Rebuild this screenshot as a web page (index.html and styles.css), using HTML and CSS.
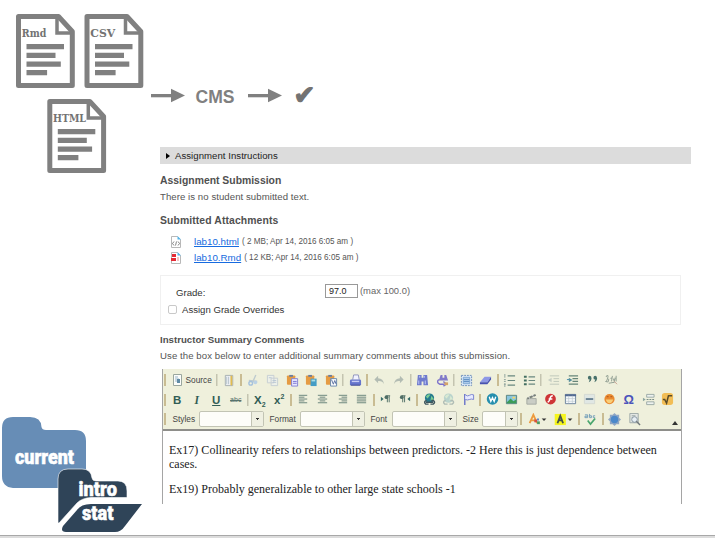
FILE: index.html
```
<!DOCTYPE html>
<html lang="en">
<head>
<meta charset="utf-8">
<title>Course workflow</title>
<link rel="stylesheet" href="styles.css">
</head>
<body>
<main class="slide">
<svg class="diagram" width="715" height="538" viewBox="0 0 715 538">
  <defs>
    <g id="file">
      <path d="M2.500 2.500H42.500L56.300 17.500V71.500H2.500Z" fill="#fff" stroke="#808080" stroke-width="5" stroke-linejoin="round"/>
      <path d="M41 3V19H56" fill="none" stroke="#808080" stroke-width="3.500"/>
      <path d="M10.500 30h37.500v5.300h-37.500zM10.500 38.700h29v5.300h-29zM10.500 47.400h34.300v5.300h-34.300zM10.500 56h20.600v5.300h-20.600z" fill="#808080"/>
    </g>
    <g id="arrow" fill="#808080"><path d="M0 4.700h20v3.300H0z"/><path d="M20 -.5L34 6.300L20 13z"/></g>
  </defs>
  <g class="doc-name">
    <use href="#file" x="16" y="14"/><text x="21.800" y="36.700" textLength="24.500" lengthAdjust="spacingAndGlyphs">Rmd</text>
    <use href="#file" x="84.500" y="14"/><text x="90.300" y="36.700" textLength="25" lengthAdjust="spacingAndGlyphs">CSV</text>
    <use href="#file" x="47.300" y="99"/><text x="53" y="121.700" textLength="33" lengthAdjust="spacingAndGlyphs">HTML</text>
  </g>
  <use href="#arrow" x="151" y="89.300"/>
  <text class="cms" x="195.500" y="103.300" textLength="39" lengthAdjust="spacingAndGlyphs">CMS</text>
  <use href="#arrow" x="248" y="89.300"/>
  <text class="check" x="293.500" y="104">✔</text>
  <path fill="#678db6" d="M2 428Q2 417 13 417H30Q41 417 41.500 427Q42 430 46 430H75Q86 430 86 441V478Q86 488 75 488H13Q2 487 2 476Z"/>
  <path fill="#2f4458" stroke="#fff" stroke-width=".6" d="M58 523V479Q58 469 68 469H82Q91 469 92 478Q92.500 481 96 481H118Q127 481 127 491V497.500H91Q82 498 77 503L59 523Z"/>
  <path fill="#2f4458" d="M142 504H91Q81 504 77 510L63 526Q60 532 66 532H115Q121 532 125 526Z"/>
  <g class="folder-name">
    <text x="15" y="463.500" textLength="59" lengthAdjust="spacingAndGlyphs">current</text>
    <text x="78.500" y="496" textLength="38.500" lengthAdjust="spacingAndGlyphs">intro</text>
    <text x="82" y="519.500" textLength="31.500" lengthAdjust="spacingAndGlyphs">stat</text>
  </g>
</svg>

<section class="form">
  <div class="accordion"><i class="caret"></i><span class="t-instr">Assignment Instructions</span></div>
  <h2 class="h-sub">Assignment Submission</h2>
  <p class="p-none">There is no student submitted text.</p>
  <h2 class="h-att">Submitted Attachments</h2>
  <ul class="files">
    <li><svg width="12" height="12" viewBox="0 0 12 12"><path d="M1.500.5h6l3 3v8h-9z" fill="#fff" stroke="#b8b8b8"/><path d="M7.500 0l3.500 3.500h-3.500z" fill="#55b4e8"/><path d="M4 5.500L2.500 7.500L4 9.500M8 5.500l1.500 2L8 9.500M6.500 5.500l-1 4" fill="none" stroke="#666" stroke-width=".8"/></svg><a>lab10.html</a><span>( 2 MB; Apr 14, 2016 6:05 am )</span></li>
    <li><svg width="12" height="12" viewBox="0 0 12 12"><path d="M1.500.5h6l3 3v8h-9z" fill="#fff" stroke="#b8b8b8"/><path d="M7.500 0l3.500 3.500h-3.500z" fill="#55b4e8"/><path d="M2 2h4v3H2zM1 6h5v3H1z" fill="#e52a35"/><path d="M7 6h2M7 8h2" stroke="#e88"/></svg><a>lab10.Rmd</a><span>( 12 KB; Apr 14, 2016 6:05 am )</span></li>
  </ul>
  <div class="grade">
    <div class="grade-row"><label>Grade:</label><span class="score">97.0</span><span class="max">(max 100.0)</span></div>
    <div class="over-row"><i class="box"></i><span>Assign Grade Overrides</span></div>
  </div>
  <h2 class="h-com">Instructor Summary Comments</h2>
  <p class="p-use">Use the box below to enter additional summary comments about this submission.</p>

  <div class="editor">
    <div class="toolbar">
      <div class="bar">
        <i class="sep gold"></i>
        <span class="source"><svg width="10" height="12" viewBox="0 0 10 12"><path d="M.5.5h8v11h-8z" fill="#fbfcfa" stroke="#9aa69e"/><path d="M2 3h3M2 5h4M2 7h3" stroke="#9bb5c8"/><path d="M4 5h3v4H4z" fill="#5f8aa6"/></svg>Source</span>
        <i class="sep"></i>
        <b class="ic"><svg viewBox="0 0 14 14"><path d="M2.500 1.500h8v11h-8z" fill="#eef1f5" stroke="#a5aeb0"/><path d="M4 3v8M6 3v8" stroke="#b5c2cb"/><path d="M8 2h2v9l-1 2-1-2z" fill="#e1bc50"/></svg></b>
        <i class="sep gold"></i>
        <b class="ic dim"><svg viewBox="0 0 14 14"><path d="M9.500 1L6 9M2 7l9 1" stroke="#aebfcb" stroke-width="1.500"/><circle cx="4" cy="10" r="2" fill="none" stroke="#8db2dc" stroke-width="1.500"/><circle cx="9" cy="9" r="2" fill="#a9c7e8"/></svg></b>
        <b class="ic dim"><svg viewBox="0 0 14 14"><path d="M1.500 1.500h7v8h-7zM5.500 4.500h7v8h-7z" fill="#edf0ee" stroke="#b9c3cf"/><path d="M7 7h4M7 9h4M3 4h3" stroke="#a8bbd3"/></svg></b>
        <b class="ic"><svg viewBox="0 0 14 14"><rect x="1" y="1.500" width="9" height="10" rx="1" fill="#e59b43"/><path d="M3.500 1h4v2h-4z" fill="#687da1"/><path d="M6 5h6.500v8H6z" fill="#e8e8ff" stroke="#837fd1"/><path d="M7.500 8h4M7.500 10h4" stroke="#7871d1"/></svg></b>
        <b class="ic"><svg viewBox="0 0 14 14"><rect x="1" y="1.500" width="9" height="10" rx="1" fill="#e59b43"/><path d="M3.500 1h4v2h-4z" fill="#687da1"/><path d="M6 5h6.500v8H6z" fill="#449dc5"/><path d="M7 6h4v2h-4" fill="#a9dce4"/></svg></b>
        <b class="ic"><svg viewBox="0 0 14 14"><rect x="1" y="1.500" width="9" height="10" rx="1" fill="#e59b43"/><path d="M3.500 1h4v2h-4z" fill="#687da1"/><path d="M6 5h6.500v8H6z" fill="#fff" stroke="#6384aa"/><path d="M7 6l2 5 1.500-4 1.500 4" fill="none" stroke="#546ca0"/></svg></b>
        <i class="sep"></i>
        <b class="ic"><svg viewBox="0 0 14 14"><path d="M4 6l1-5h5l1 5" fill="#f1f2ff" stroke="#8c91bb"/><rect x="1" y="6" width="12" height="6.500" rx="1.500" fill="#6675cc"/><path d="M3 8h8" stroke="#c8cdf5" stroke-width="1.500"/><path d="M2 12h10" stroke="#474f91"/></svg></b>
        <i class="sep gold"></i>
        <b class="ic"><svg viewBox="0 0 14 14"><path d="M5.500 2L1.500 6l4 4V7.500Q10 7 12 11Q11 4.500 5.500 4.500z" fill="#b3bcb3"/></svg></b>
        <b class="ic"><svg viewBox="0 0 14 14"><path d="M8.500 2l4 4-4 4V7.500Q4 7 2 11Q3 4.500 8.500 4.500z" fill="#b3bcb3"/></svg></b>
        <i class="sep"></i>
        <b class="ic"><svg viewBox="0 0 14 14"><path d="M2 1h4v3h2V1h4l1 11H8V8H6v4H1z" fill="#6f7bcd"/><path d="M3 7v4M10 7v4M4 2v2M9 2v2" stroke="#c1c9fa"/></svg></b>
        <b class="ic"><svg viewBox="0 0 14 14"><path d="M5 1h2v3h2V1h2l2 6H3z" fill="#817ac9"/><path d="M3 6Q0 9 4 11H9M8 8l3 3-3 2" fill="none" stroke="#7c71cb" stroke-width="1.500"/><path d="M9 9h4v3H9z" fill="#d5a367"/></svg></b>
        <i class="sep"></i>
        <b class="ic"><svg viewBox="0 0 14 14"><path d="M1.500 1.500h11v11h-11z" fill="#e4effb" stroke="#6c8db8" stroke-dasharray="2 1"/><path d="M3.500 3.500h7v7h-7z" fill="#aecbea" stroke="#7ba5d0"/><path d="M4 6h6M4 8h6" stroke="#5d8ac0"/></svg></b>
        <b class="ic"><svg viewBox="0 0 14 14"><path d="M1 9l5-6h7l-4 6z" fill="#8e98e6"/><path d="M1 9h8l4-6v3l-4 5H1z" fill="#4752b2"/></svg></b>
        <i class="sep gold"></i>
        <b class="ic"><svg viewBox="0 0 14 14"><path d="M5 2h8M5 7h8M5 12h8" stroke="#69877f" stroke-width="1.200"/><path d="M2 0v4M1 6h2M1 8h2M1 11h2M2 10v4" stroke="#8ba099"/></svg></b>
        <b class="ic"><svg viewBox="0 0 14 14"><path d="M6 3h7M6 7h7M6 11h7" stroke="#69877f" stroke-width="1.300"/><path d="M1 2h3v2H1zM1 6h3v2H1zM1 10h3v2H1z" fill="#446f62"/></svg></b>
        <i class="sep"></i>
        <b class="ic dim"><svg viewBox="0 0 14 14"><path d="M3 2h10M7 5h6M7 8h6M3 11h10" stroke="#aebaaf"/><path d="M5 4L1 6.500 5 9z" fill="#bbc5bd"/></svg></b>
        <b class="ic"><svg viewBox="0 0 14 14"><path d="M3 2h10M7 5h6M7 8h6M3 11h10" stroke="#678579" stroke-width="1.300"/><path d="M1 6h4" stroke="#468baa"/><path d="M3 4l4 2.500L3 9z" fill="#568e9c"/></svg></b>
        <b class="ic"><svg viewBox="0 0 14 14"><path d="M2 4Q2 2 4 2Q6 2 6 5Q5.500 8 3 9l1-3Q2 6 2 4zM8 4Q8 2 10 2Q12 2 12 5Q11.500 8 9 9l1-3Q8 6 8 4z" fill="#47706a"/></svg></b>
        <b class="ic"><svg viewBox="0 0 14 14"><path d="M1 3Q4 0 3 4T1 8q3 2 3-3M6 5q2-2 1 3M8 2l-1 6M9 5l1 3 1-4M12 2v6M4 10l6-1" fill="none" stroke="#98a598" stroke-width="1.100"/><path d="M10 8l3 3" stroke="#c79d8d"/></svg></b>
      </div>
      <div class="bar">
        <i class="sep gold"></i>
        <b class="ic ltr">B</b><b class="ic ltr serif"><em>I</em></b><b class="ic ltr"><u>U</u></b><b class="ic strike"><s>abc</s></b>
        <i class="sep"></i>
        <b class="ic ltr x">X<sub>2</sub></b><b class="ic ltr x">x<sup>2</sup></b>
        <i class="sep gold"></i>
        <b class="ic"><svg viewBox="0 0 14 14"><path d="M2 2.500h9M2 4.500h6M2 6.500h9M2 8.500h6M2 10.500h9" stroke="#668178"/></svg></b>
        <b class="ic"><svg viewBox="0 0 14 14"><path d="M2 2.500h10M4 4.500h6M2 6.500h10M4 8.500h6M2 10.500h10" stroke="#668178"/></svg></b>
        <b class="ic"><svg viewBox="0 0 14 14"><path d="M3 2.500h9M6 4.500h6M3 6.500h9M6 8.500h6M3 10.500h9" stroke="#668178"/></svg></b>
        <b class="ic"><svg viewBox="0 0 14 14"><path d="M2 2.500h10M2 4.500h10M2 6.500h10M2 8.500h10M2 10.500h10" stroke="#668178"/></svg></b>
        <i class="sep gold"></i>
        <b class="ic"><svg viewBox="0 0 14 14"><path d="M2 4l3 2.500L2 9z" fill="#366b68"/><path d="M8 3h4M9 3v7M11 3v7" stroke="#506e66"/><circle cx="8" cy="4.500" r="2" fill="#506e66"/></svg></b>
        <b class="ic"><svg viewBox="0 0 14 14"><path d="M12 4L9 6.500 12 9z" fill="#366b68"/><path d="M3 3h4M4 3v7M6 3v7" stroke="#506e66"/><circle cx="3" cy="4.500" r="2" fill="#506e66"/></svg></b>
        <i class="sep gold"></i>
        <b class="ic"><svg viewBox="0 0 14 14"><circle cx="7" cy="5.500" r="5" fill="#257b8d"/><path d="M3 4Q6 0 8 2L5 6zM9 3l3 4-4 1z" fill="#7bcc93"/><path d="M3 10h8M4 8Q0 9 3 12h3M9 8h2q3 2 0 4H8" fill="none" stroke="#3e565e" stroke-width="1.500"/></svg></b>
        <b class="ic dim"><svg viewBox="0 0 14 14"><circle cx="7" cy="5.500" r="5" fill="#a9cbc8"/><path d="M3 4Q6 0 8 2L5 6zM9 3l3 4-4 1z" fill="#d2e8cf"/><path d="M4 8Q0 9 3 12h3M9 8h2q3 2 0 4H8" fill="none" stroke="#9aaba8" stroke-width="1.500"/></svg></b>
        <b class="ic"><svg viewBox="0 0 14 14"><path d="M3 1v12" stroke="#6771ca" stroke-width="1.500"/><path d="M3.500 2Q6 4 8 2.500T12.500 2V7Q10 6 8 7T3.500 7" fill="#e6e9ff" stroke="#7680ce"/></svg></b>
        <i class="sep gold"></i>
        <b class="ic"><svg viewBox="0 0 14 14"><circle cx="7" cy="6.500" r="6.200" fill="#268fae"/><path d="M3.500 4l1.700 5L7 5l1.800 4 1.700-5" fill="none" stroke="#fff" stroke-width="1.400"/></svg></b>
        <b class="ic"><svg viewBox="0 0 14 14"><path d="M1.500 2.500h11v9h-11z" fill="#8ac5df" stroke="#58837b"/><path d="M2 10l4-4 3 3 3-2v4H2z" fill="#3c9c58"/><path d="M8 4h3v2H8z" fill="#f3d766"/></svg></b>
        <b class="ic"><svg viewBox="0 0 14 14"><path d="M2 6h10v6H2z" fill="#cacdc5" stroke="#a3a9a1"/><path d="M2 5l9-4 1 2-9 4z" fill="#777f7a"/><path d="M4 4l1 2M8 2l1 2" stroke="#eee"/></svg></b>
        <b class="ic"><svg viewBox="0 0 14 14"><circle cx="7" cy="6.500" r="5.800" fill="#ce3537"/><path d="M9.500 3Q7 3 6.500 6T4 10M5 6.500h4" fill="none" stroke="#fff" stroke-width="1.600"/></svg></b>
        <b class="ic"><svg viewBox="0 0 14 14"><path d="M1.500 1.500h11v10h-11z" fill="#f4f8fa" stroke="#687f9b"/><path d="M1 2.500h12" stroke="#526991" stroke-width="2"/><path d="M2 6h10M2 9h10M5 3v8M9 3v8" stroke="#bcc9d0" stroke-width=".7"/></svg></b>
        <b class="ic"><svg viewBox="0 0 14 14"><path d="M1.500 1.500h11v10h-11z" fill="#e0e7e4" stroke="#d4d9d3"/><path d="M3 6.500h8" stroke="#688092" stroke-width="2"/></svg></b>
        <b class="ic"><svg viewBox="0 0 14 14"><circle cx="7" cy="6.500" r="5.500" fill="#e98a30"/><path d="M3 7h8Q10 11 7 11T3 7" fill="#f9ce78"/><path d="M4 4h2M8 4h2" stroke="#ab521d"/></svg></b>
        <b class="ic ltr omega">Ω</b>
        <b class="ic"><svg viewBox="0 0 14 14"><path d="M5 1.500h8v3H5zM5 9.500h8v3H5z" fill="#edf1ef" stroke="#9aa9a5"/><path d="M5 7h8" stroke="#6f857f" stroke-dasharray="2 1"/><path d="M1 5l3 2-3 2z" fill="#8ba49f"/></svg></b>
        <b class="ic"><svg viewBox="0 0 14 14"><rect x="1" y="0" width="12" height="13" rx="3" fill="#f2bd55"/><path d="M2 7h2l2 4 2-8h4" fill="none" stroke="#5a4c29" stroke-width="1.600"/></svg></b>
      </div>
      <div class="bar combos">
        <i class="sep gold"></i>
        <span class="lab styles">Styles</span><span class="combo"><i></i></span>
        <span class="lab format">Format</span><span class="combo"><i></i></span>
        <span class="lab font">Font</span><span class="combo"><i></i></span>
        <span class="lab size">Size</span><span class="combo small"><i></i></span>
        <i class="sep wide gold"></i>
        <b class="ic color"><svg width="22" height="14" viewBox="0 0 22 14"><path d="M2 11L6 2l4 9M4 8h4" fill="none" stroke="#ed9b3e" stroke-width="2"/><path d="M7 7h3v3H7z" fill="#d45143"/><path d="M10 9h3v3h-3z" fill="#4d9c63"/><path d="M10 6h2v2h-2z" fill="#567ec6"/><path d="M15 6h5l-2.500 2.500z" fill="#333"/></svg></b>
        <b class="ic color"><svg width="22" height="14" viewBox="0 0 22 14"><path d="M1 1h12v12H1z" fill="#f5f51e"/><path d="M4 11l3-8 3 8M5 8h4" fill="none" stroke="#455349" stroke-width="2"/><path d="M15 6h5l-2.500 2.500z" fill="#333"/></svg></b>
        <i class="sep gold"></i>
        <b class="ic"><svg viewBox="0 0 14 14"><path d="M1 2h3v3H1V3.500h3M6 1v4h2V3H6M12 3H10v2h2" fill="none" stroke="#719eb9"/><path d="M4 8l3 4 5-6" fill="none" stroke="#49a66e" stroke-width="1.800"/></svg></b>
        <i class="sep gold"></i>
        <b class="ic"><svg viewBox="0 0 14 14"><path d="M7 0l2 2h3v3l2 2-2 2v3H9l-2 2-2-2H2V9L0 7l2-2V2h3z" fill="#8fa6c4"/><circle cx="7" cy="7" r="4" fill="#4b88ca"/></svg></b>
        <b class="ic"><svg viewBox="0 0 14 14"><path d="M2 .5h9v10H2z" fill="#e3e7e4" stroke="#99a5a4"/><path d="M4 3h4M4 5h3" stroke="#92a1a0"/><circle cx="7" cy="7" r="3" fill="#e7eff4" stroke="#8594a0"/><path d="M9 9l4 4" stroke="#70777b" stroke-width="1.500"/></svg></b>
        <span class="collapse"></span>
      </div>
    </div>
    <div class="content">
      <p>Ex17) Collinearity refers to relationships between predictors. -2 Here this is just dependence between</p>
      <p>cases.</p>
      <p class="answer">Ex19) Probably generalizable to other large state schools -1</p>
    </div>
  </div>
</section>
</main>
</body>
</html>
```
FILE: styles.css
```
* { box-sizing: border-box; }
body { margin: 0; background: #fff; }
.slide {
  position: relative;
  width: 715px; height: 538px;
  overflow: hidden;
  border-bottom: 2px solid #dcdcdc;
  box-shadow: inset 0 -1px #a8a8a8;
}
.diagram { position: absolute; left: 0; top: 0; }
.doc-name { font: bold 11.500px "DejaVu Serif", serif; fill: #737373; }
.cms { font: bold 18.500px "Liberation Sans", sans-serif; fill: #808080; }
.check { font: 26px "DejaVu Sans", sans-serif; fill: #737373; stroke: #737373; stroke-width: 1.200; }
.folder-name { font: 900 20px Roboto, sans-serif; fill: #fff; stroke: #fff; stroke-width: .5; }

.form {
  width: 531px;
  margin-left: 160px;
  padding-top: 147px;
  font: 9.600px/12px "Liberation Sans", sans-serif;
  color: #555;
}
.form span, .form a, p, h2, label { white-space: nowrap; }
h2, p, ul { margin: 0; padding: 0; }
h2 { font-size: 10.400px; line-height: 12px; color: #505050; }
.accordion { height: 17px; background: #dcdcdc; display: flex; align-items: center; color: #222; letter-spacing: .04px; }
.caret { border: 3px solid transparent; border-left: 4px solid #000; border-right: 0; margin: 0 5px 0 6px; }
.h-sub { margin-top: 11px; }
.p-none { margin-top: 4px; letter-spacing: .06px; }
.h-att { margin-top: 12px; letter-spacing: .1px; }
.files { list-style: none; margin-top: 7px; }
.files li { height: 16px; display: flex; align-items: center; padding-left: 10px; }
.files svg { margin-right: 12px; }
.files a { color: #176be0; text-decoration: underline; font-size: 9.750px; }
.files span { font-size: 8.150px; margin-left: 3px; }
.grade { width: 521px; height: 50px; margin-top: 9px; border: 1px solid #f0f0f0; padding: 7px 0 0 7px; color: #333; }
.grade-row { display: flex; height: 15px; align-items: center; padding-left: 8px; }
.grade-row label { width: 149px; padding-top: 4px; }
.score { width: 33px; height: 14px; border: 1px solid #999; padding-left: 3px; font-size: 9px; line-height: 13px; color: #222; }
.max { margin-left: 2px; color: #666; font-size: 9.400px; }
.over-row { display: flex; align-items: center; height: 23px; }
.box { width: 9px; height: 9px; border: 1px solid #c9c9c9; border-radius: 2px; margin-right: 5px; }
.h-com { margin-top: 9px; font-size: 9.670px; }
.p-use { margin-top: 4px; letter-spacing: .075px; }

.editor { width: 520px; height: 135px; margin: 7px 0 0 2px; border: solid #a5a5a5; border-width: 0 1px 0 1px; }
.toolbar { height: 62px; background: #eff0dc; border-bottom: 2px solid #8e8e8a; padding-top: 1.500px; }
.bar { display: flex; align-items: center; height: 19.500px; }
.sep { flex: none; width: 4.500px; height: 12px; background: linear-gradient(#c4c4b0, #c4c4b0) center / 1.500px 100% no-repeat; }
.sep.gold { background-image: linear-gradient(#c9bc93, #c9bc93); background-size: 2px 100%; }
.ic { flex: none; width: 19.500px; height: 18px; display: flex; align-items: center; justify-content: center; }
.ic svg { height: 13px; width: 13px; }
.dim { opacity: .75; }
.source { width: 47.300px; display: flex; align-items: center; padding-left: 5px; gap: 3px; font-size: 8.300px; color: #444; }
.ltr { font-size: 11.500px; color: #315d55; }
.serif { font-family: "Liberation Serif", serif; }
.strike { font-size: 7px; font-weight: 400; color: #58736d; }
.x sub, .x sup { font-size: 7px; line-height: 7px; }
.x sub { align-self: flex-end; padding-bottom: 1px; }
.x sup { align-self: flex-start; padding-top: 2px; }
.omega { color: #4c54bb; font-size: 13px; }
.lab { font-size: 8.300px; color: #444; padding-left: 5px; }
.styles { width: 31px; }
.format, .font, .size { padding-left: 6px; }
.format { width: 36px; }
.font { width: 27px; }
.size { width: 25px; }
.combo { width: 65px; height: 16px; border: 1px solid #c2c4b4; border-radius: 2px; background: #fdfdf9; display: flex; justify-content: flex-end; }
.combo i { width: 12px; border-left: 1px solid #c2c4b4; background: #eff0e2 conic-gradient(from -45deg at 50% 60%, #333 90deg, transparent 0) center / 5px 3px no-repeat; }
.combo.small { width: 36px; }
.wide { width: 7px; }
.color { width: 26px; }
.color svg { width: 22px; }
.collapse { margin: 7px 3px 0 auto; border: 3px solid transparent; border-top: 0; border-bottom: 4px solid #333; }
.content { padding: 12px 6px 0; font: 12.020px/14px "Liberation Serif", serif; color: #222; }
.answer { margin-top: 11px; }
```
